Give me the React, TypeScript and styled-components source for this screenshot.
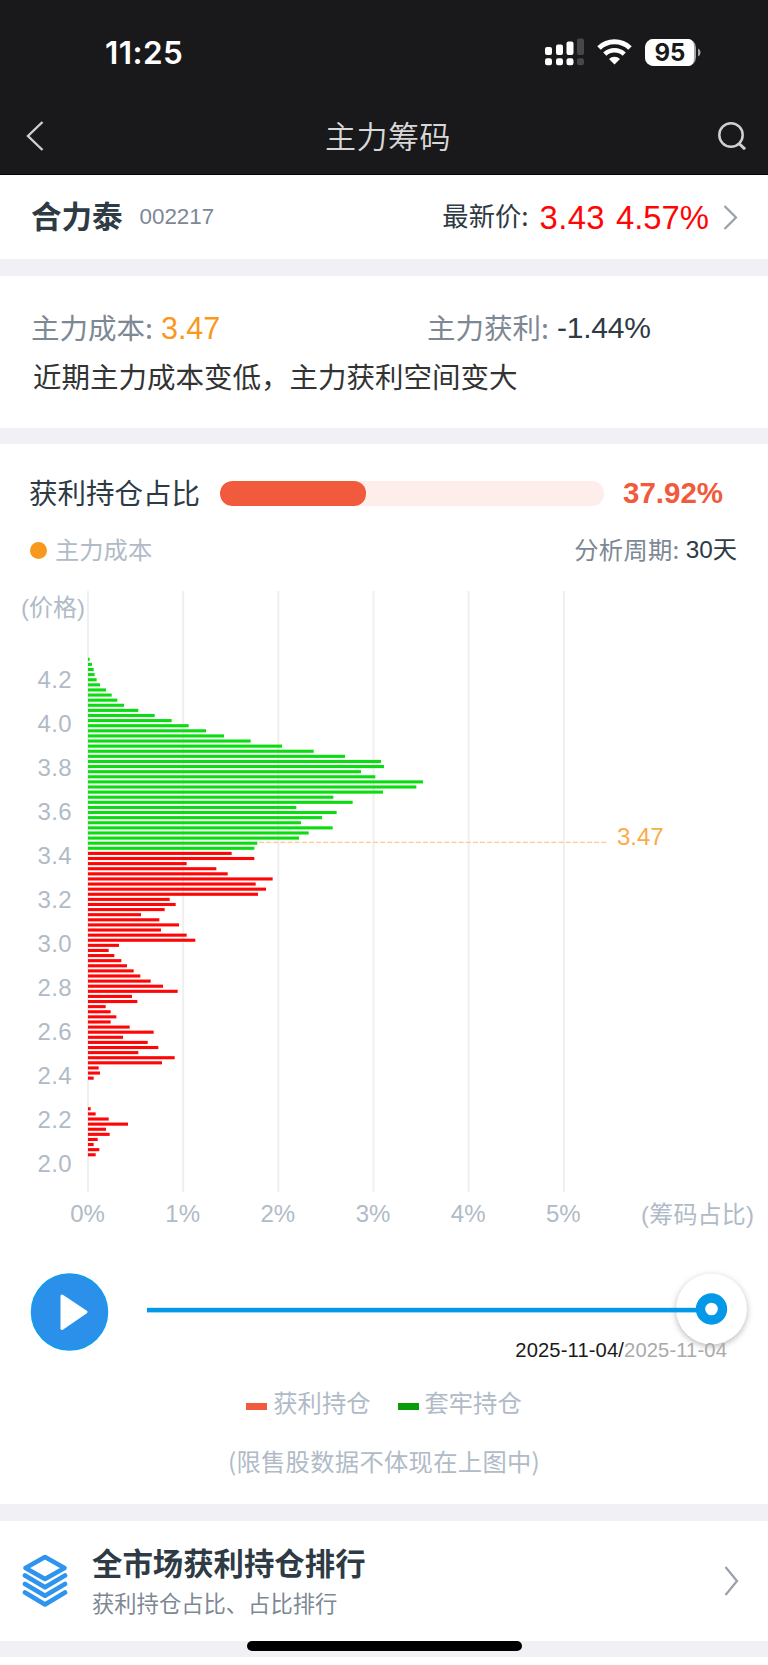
import React from "react";
import styled, { createGlobalStyle } from "styled-components";

const GlobalStyle = createGlobalStyle`
  * { box-sizing: border-box; }
  body {
    margin: 0;
    background: #fff;
    font-family: "Liberation Sans", "Noto Sans CJK SC", sans-serif;
    color: #2e3a44;
  }
  svg { display: block; flex: none; }
`;

const Page = styled.main`
  width: 768px;
  height: 1665px;
  display: flex;
  flex-direction: column;
  overflow: hidden;
  background: #fff;
`;

const Header = styled.header`
  height: 175px;
  flex: none;
  background: #19191b;
  border-bottom: 1px solid #050505;
`;

const StatusBar = styled.div`
  height: 98px;
  padding: 6px 67px 0 105px;
  display: flex;
  align-items: center;
  color: #fff;
`;

const Clock = styled.span`
  font: 600 31.5px/40px Inter, sans-serif;
  letter-spacing: 0.4px;
  margin-right: auto;
  padding-top: 1px;
`;

const NavBar = styled.nav`
  height: 76px;
  padding: 0 22px 0 26px;
  display: grid;
  grid-template-columns: 60px 1fr 60px;
  align-items: center;
  color: #d8d8d8;
`;

const NavTitle = styled.h1`
  margin: 0 0 3px 4px;
  text-align: center;
  font: 350 31px/44px "Noto Sans CJK SC", sans-serif;
  letter-spacing: 0.5px;
`;

const NavEnd = styled.div`
  display: flex;
  justify-content: flex-end;
`;

const Section = styled.section<{ $h: number }>`
  height: ${(p) => p.$h}px;
  flex: none;
`;

const Divider = styled.div<{ $h?: number }>`
  height: ${(p) => p.$h ?? 16}px;
  flex: none;
  background: #f1f0f5;
`;

const Text = styled.span<{
  $size: number;
  $color?: string;
  $weight?: number;
  $ls?: number;
}>`
  font-size: ${(p) => p.$size}px;
  line-height: 1.4;
  color: ${(p) => p.$color ?? "#2e3a44"};
  font-weight: ${(p) => p.$weight ?? 400};
  letter-spacing: ${(p) => p.$ls ?? 0}px;
  white-space: nowrap;
`;

const Cjk = styled(Text)`
  font-family: "Noto Sans CJK SC", sans-serif;
  padding-bottom: 3px;
`;

const StockRow = styled.div`
  height: 84px;
  padding: 0 30px 0 31px;
  display: flex;
  align-items: center;
`;

const Code = styled(Text)`
  margin: 0 auto 0 17px;
`;

const Price = styled(Text)`
  margin-left: 11px;
  padding-top: 1px;
`;

const PriceChange = styled(Text)`
  margin: 0 14px 0 11px;
  padding-top: 1px;
`;

const Stats = styled.div`
  padding: 31px 30px 0 31px;
`;

const StatRow = styled.div`
  display: grid;
  grid-template-columns: 396px 1fr;
  height: 40px;
`;

const Stat = styled.div`
  display: flex;
  align-items: center;
  gap: 8px;
  padding-bottom: 2px;
`;

const Summary = styled.p`
  margin: 10px 0 0 2px;
  height: 40px;
  display: flex;
  align-items: center;
`;

const RatioRow = styled.div`
  height: 40px;
  margin-top: 29px;
  padding: 0 44px 0 29px;
  display: flex;
  align-items: center;
`;

const Track = styled.div`
  width: 384px;
  height: 25px;
  margin: 0 19px 0 20px;
  border-radius: 12px;
  background: #fdeeeb;
  overflow: hidden;
`;

const Fill = styled.div`
  height: 100%;
  border-radius: 12px;
  background: #f15a3c;
`;

const KeyRow = styled.div`
  height: 36px;
  margin-top: 19px;
  padding: 0 31px 0 30px;
  display: flex;
  align-items: center;
`;

const Dot = styled.i`
  width: 17px;
  height: 17px;
  border-radius: 50%;
  background: #f8981d;
  margin-right: 8px;
`;

const KeyLabel = styled(Cjk)`
  margin-right: auto;
`;

const Period = styled(Text)`
  margin-left: 6px;
  padding-top: 1px;
`;

const Chart = styled.svg`
  margin-top: 14px;
  font-family: "Liberation Sans", "Noto Sans CJK SC", sans-serif;
  font-size: 24px;
`;

const Player = styled.div`
  height: 78px;
  margin-top: 31px;
  padding: 0 0 0 30px;
  display: flex;
  align-items: flex-start;
`;

const Slider = styled.svg`
  margin-left: 37px;
  overflow: visible;
`;

const Dates = styled.div`
  position: relative;
  height: 28px;
  margin-top: -15px;
  padding-right: 41px;
  display: flex;
  justify-content: flex-end;
`;

const Legend = styled.div`
  height: 36px;
  margin-top: 21px;
  display: flex;
  justify-content: center;
  align-items: center;
  gap: 27px;
`;

const LegendItem = styled.div`
  display: flex;
  align-items: center;
  gap: 6px;
`;

const Swatch = styled.i<{ $color: string }>`
  width: 21px;
  height: 7px;
  margin-top: 6px;
  background: ${(p) => p.$color};
`;

const Note = styled.div`
  height: 36px;
  margin-top: 23px;
  display: flex;
  justify-content: center;
  align-items: center;
`;

const RankRow = styled.div`
  height: 120px;
  padding: 0 29px 0 22px;
  display: flex;
  align-items: center;
`;

const RankText = styled.div`
  margin: 0 auto 0 24px;
  display: flex;
  flex-direction: column;
`;

const HomeArea = styled.footer`
  height: 16px;
  flex: none;
  background: #f1f0f5;
  display: flex;
  justify-content: center;
`;

const HomeBar = styled.div`
  width: 275px;
  height: 10px;
  border-radius: 5px;
  background: #000;
`;

const Chevron = ({ height }: { height: number }) => (
  <svg width="15" height={height} viewBox={`0 0 15 ${height}`} fill="none">
    <path d={`M1.5 1 L13 ${height / 2} L1.5 ${height - 1}`} stroke="#9aa0a8" strokeWidth="2.2" />
  </svg>
);

const SignalIcon = () => (
  <svg width="39" height="28" viewBox="0 0 39 28" fill="#fff">
    <rect x="0" y="9" width="7" height="8" rx="2" />
    <rect x="11" y="6.5" width="7" height="10.5" rx="2" />
    <rect x="21.5" y="3.5" width="7" height="13.5" rx="2" />
    <rect x="32" y="0.5" width="7" height="16.5" rx="2" fill="#47474a" />
    <rect x="0" y="20.3" width="7" height="7" rx="2.2" />
    <rect x="11" y="20.3" width="7" height="7" rx="2.2" />
    <rect x="21.5" y="20.3" width="7" height="7" rx="2.2" />
    <rect x="32" y="20.3" width="7" height="7" rx="2.2" fill="#47474a" />
  </svg>
);

const WifiIcon = styled.svg`
  margin: 0 13px 0 13px;
`;

const prices = ["4.2", "4.0", "3.8", "3.6", "3.4", "3.2", "3.0", "2.8", "2.6", "2.4", "2.2", "2.0"];

const PLOT_LEFT = 88;
const STEP_X = 95.17;
const BAR_STEP = 5.108;

/* Bar lengths in thirds of a pixel, highest price first. */
const trapped = [
  5, 12, 17, 20, 26, 36, 54, 71, 88, 108, 151, 200, 251, 302, 354, 408, 488, 582, 677, 771, 879,
  888, 819, 862, 1005, 985, 885, 736, 794, 625, 746, 702, 639, 734, 662, 633, 508, 499,
];
const profit = [
  431, 499, 296, 385, 419, 554, 503, 534, 510, 245, 263, 230, 159, 214, 273, 219, 296, 322, 93, 62,
  79, 100, 117, 137, 157, 188, 225, 269, 132, 148, 53, 68, 85, 68, 125, 197, 105, 179, 211, 151,
  260, 222, 32, 36, 17, 0, 0, 0, 0, 0, 8, 23, 62, 120, 54, 65, 29, 17, 34, 23,
];

const ChipChart = () => (
  <Chart width="768" height="660" viewBox="0 582 768 660">
    <g fill="#efefef">
      {[0, 1, 2, 3, 4, 5].map((i) => (
        <rect key={i} x={PLOT_LEFT + i * STEP_X - 1} y="591" width="2" height="601" />
      ))}
    </g>
    {[...trapped, ...profit].map((v, i) =>
      v ? (
        <rect
          key={i}
          x={PLOT_LEFT}
          y={657.75 + i * BAR_STEP}
          width={v / 3}
          height="3.1"
          fill={i < trapped.length ? "#0bdc12" : "#ff0505"}
        />
      ) : null
    )}
    <line x1="259" x2="608" y1="842.4" y2="842.4" stroke="#ffc98a" strokeWidth="1.2" strokeDasharray="5 2.13" />
    <text x="617" y="845" fill="#fbab4a">3.47</text>
    <g fill="#b0bbc7">
      <text x="21" y="616">(价格)</text>
      {prices.map((p, i) => (
        <text key={p} x="72" y={688.2 + i * 43.95} textAnchor="end" letterSpacing="0.4">{p}</text>
      ))}
      {[0, 1, 2, 3, 4, 5].map((i) => (
        <text key={i} x={PLOT_LEFT - 0.5 + i * STEP_X} y="1222" textAnchor="middle">{i}%</text>
      ))}
      <text x="641" y="1222.5" letterSpacing="0.2">(筹码占比)</text>
    </g>
  </Chart>
);

export default function App() {
  return (
    <Page>
      <GlobalStyle />
      <Header>
        <StatusBar>
          <Clock>11:25</Clock>
          <SignalIcon />
          <WifiIcon width="35" height="26" viewBox="0 0 35 26" fill="none" stroke="#fff">
            <path d="M2 9 A22.5 22.5 0 0 1 33 9" strokeWidth="5" />
            <path d="M7.8 15.2 A14 14 0 0 1 27.2 15.2" strokeWidth="4.6" />
            <path d="M17.5 25.5 L12 20 A8 8 0 0 1 23 20 Z" fill="#fff" stroke="none" />
          </WifiIcon>
          <svg width="56" height="27" viewBox="0 0 56 27">
            <rect width="51" height="27" rx="8.5" fill="#a5a5a7" />
            <path d="M8.5 0H44Q49 1 49 8V19Q49 26 44 27H8.5A8.5 8.5 0 0 1 0 18.5V8.5A8.5 8.5 0 0 1 8.5 0Z" fill="#fff" />
            <path d="M53 9.5 Q55.6 10.5 55.6 13.5 T53 17.5 Z" fill="#a5a5a7" />
            <text x="25" y="22.3" textAnchor="middle" fontFamily="Inter" fontWeight="700" fontSize="24" fill="#19191b">
              95
            </text>
          </svg>
        </StatusBar>
        <NavBar>
          <svg width="18" height="30" viewBox="0 0 18 30" fill="none">
            <path d="M16.5 1 L2 15 L16.5 29" stroke="#cfcfcf" strokeWidth="2.4" />
          </svg>
          <NavTitle>主力筹码</NavTitle>
          <NavEnd>
            <svg width="28" height="28" viewBox="0 0 28 28" fill="none" stroke="#cfcfcf">
              <circle cx="13" cy="13" r="11.7" strokeWidth="2.5" />
              <path d="M20.5 21 L27 27.2" strokeWidth="3" />
            </svg>
          </NavEnd>
        </NavBar>
      </Header>

      <Section $h={84}>
        <StockRow>
          <Cjk $size={30.5} $weight={700}>合力泰</Cjk>
          <Code $size={22.4} $color="#7d8894">002217</Code>
          <Cjk $size={26.3}>最新价:</Cjk>
          <Price $size={32.8} $color="#ff0505" $ls={0.4}>3.43</Price>
          <PriceChange $size={32.8} $color="#ff0505">4.57%</PriceChange>
          <Chevron height={25} />
        </StockRow>
      </Section>
      <Divider $h={17} />

      <Section $h={152}>
        <Stats>
          <StatRow>
            <Stat>
              <Cjk $size={28.5} $color="#7d8894">主力成本:</Cjk>
              <Text $size={30.5} $color="#f8981d">3.47</Text>
            </Stat>
            <Stat>
              <Cjk $size={28.5} $color="#7d8894">主力获利:</Cjk>
              <Text $size={30} $ls={-0.2}>-1.44%</Text>
            </Stat>
          </StatRow>
          <Summary>
            <Cjk $size={28.5} $color="#333">近期主力成本变低，主力获利空间变大</Cjk>
          </Summary>
        </Stats>
      </Section>
      <Divider />

      <Section $h={1060}>
        <RatioRow>
          <Cjk $size={28.5}>获利持仓占比</Cjk>
          <Track>
            <Fill style={{ width: "37.92%" }} />
          </Track>
          <Text $size={29.5} $weight={700} $color="#f15a3c">37.92%</Text>
        </RatioRow>
        <KeyRow>
          <Dot />
          <KeyLabel $size={24.3} $color="#b0bbc7">主力成本</KeyLabel>
          <Cjk $size={24.3} $color="#7d8894" $ls={0.3}>分析周期:</Cjk>
          <Period $size={24.3}>30天</Period>
        </KeyRow>
        <ChipChart />
        <Player>
          <svg width="79" height="78" viewBox="0 0.5 79 78">
            <circle cx="39.5" cy="39.5" r="38" fill="#2b90ea" stroke="#0f9dec" strokeWidth="1.5" />
            <path d="M32 23.5 L56 39.5 L32 56 Z" fill="#fff" stroke="#fff" strokeWidth="3" strokeLinejoin="round" />
          </svg>
          <Slider width="600" height="76" viewBox="0 1 600 76">
            <circle cx="565.5" cy="37" r="35.5" fill="#fff" style={{ filter: "drop-shadow(0 2px 3px rgba(0,0,0,.28))" }} />
            <rect x="1" y="35.8" width="552" height="4.6" fill="#0399e8" />
            <circle cx="565.5" cy="37" r="11" fill="#fff" stroke="#0399e8" strokeWidth="9.4" />
          </Slider>
        </Player>
        <Dates>
          <Text $size={20.2} $ls={0.12} $color="#1a1a1a">2025-11-04/</Text>
          <Text $size={20.2} $ls={0.12} $color="#aaaaaa">2025-11-04</Text>
        </Dates>
        <Legend>
          <LegendItem>
            <Swatch $color="#f15a3c" />
            <Cjk $size={24.3} $color="#b0bbc7">获利持仓</Cjk>
          </LegendItem>
          <LegendItem>
            <Swatch $color="#0a9c08" />
            <Cjk $size={24.3} $color="#b0bbc7">套牢持仓</Cjk>
          </LegendItem>
        </Legend>
        <Note>
          <Cjk $size={24.3} $color="#b0bbc7" $ls={0.3}>(限售股数据不体现在上图中)</Cjk>
        </Note>
      </Section>
      <Divider $h={17} />

      <Section $h={120}>
        <RankRow>
          <svg width="46" height="54" viewBox="0 0 46 54" fill="none" stroke="#2f94ee" strokeWidth="4.6" strokeLinecap="round" strokeLinejoin="round">
            <path d="M23 3 L42.5 14 L23 25 L3.5 14 Z" />
            <path d="M3 21.5 L23 33.3 L43 21.5" />
            <path d="M3 30 L23 41.8 L43 30" />
            <path d="M3 38.5 L23 50.4 L43 38.5" />
          </svg>
          <RankText>
            <Cjk $size={30.4} $weight={700}>全市场获利持仓排行</Cjk>
            <Cjk $size={22.3} $color="#7d8894">获利持仓占比、占比排行</Cjk>
          </RankText>
          <Chevron height={30} />
        </RankRow>
      </Section>
      <HomeArea>
        <HomeBar />
      </HomeArea>
    </Page>
  );
}
